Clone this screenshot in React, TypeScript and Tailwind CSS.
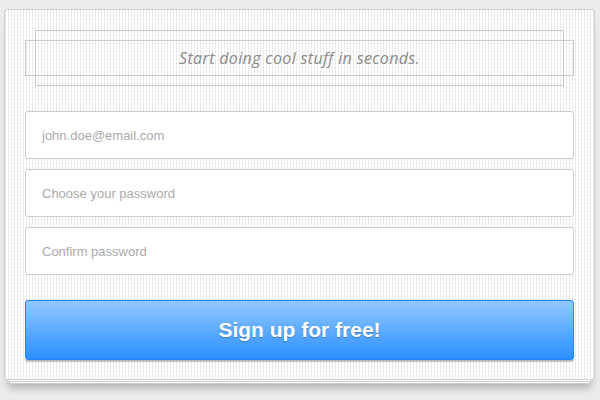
import React from 'react';

const fields = ['john.doe@email.com', 'Choose your password', 'Confirm password'];

export default function App() {
  return (
    <div className="w-[600px] h-[400px] overflow-hidden bg-[#ececec] pt-[9px] pl-[4px]">
      <div
        className="w-[591px] rounded-[3px] border border-[#cfcfcf] bg-white bg-[linear-gradient(0deg,#fff_1px,transparent_1px),linear-gradient(90deg,#e3e3e3_1px,transparent_1px)] bg-[size:3px_4px] px-[20px] pt-[20px] pb-[19px] shadow-[0_5px_0_-4px_#fff,0_5px_0_-3px_#cdcdcd,0_9px_0_-6px_#fff,0_9px_0_-5px_#cdcdcd,0_12px_8px_-4px_rgba(0,0,0,0.25)]"
      >
        {/* header band */}
        <div className="relative h-[56px]">
          <div className="absolute inset-x-0 top-[10px] bottom-[10px] border border-[#cacaca]" />
          <div className="absolute inset-y-0 left-[10px] right-[10px] border border-[#cacaca]" />
          <div className="relative h-full flex items-center justify-center font-['Open_Sans',sans-serif] italic text-[16px] tracking-[0.35px] text-[#8a8a8a]">
            Start doing cool stuff in seconds.
          </div>
        </div>

        <div className="mt-[25px] flex flex-col gap-[10px]">
          {fields.map((f) => (
            <input
              key={f}
              type={f === 'john.doe@email.com' ? 'text' : 'password'}
              placeholder={f}
              className="h-[48px] w-full rounded-[3px] border border-[#cccccc] bg-white px-[16px] font-['Liberation_Sans',Arial,sans-serif] text-[13px] text-[#555] placeholder:text-[#aaaaaa] outline-none"
            />
          ))}
        </div>

        <button className="mt-[25px] h-[60px] w-full rounded-[3px] border border-[#2186f8] bg-[linear-gradient(180deg,#93c8ff,#2a8fff)] shadow-[0_2px_1px_rgba(0,0,0,0.25)] font-['Liberation_Sans',Arial,sans-serif] text-[21px] font-bold text-white [text-shadow:0_1px_1px_rgba(0,0,0,0.25)]">
          Sign up for free!
        </button>
      </div>
    </div>
  );
}
